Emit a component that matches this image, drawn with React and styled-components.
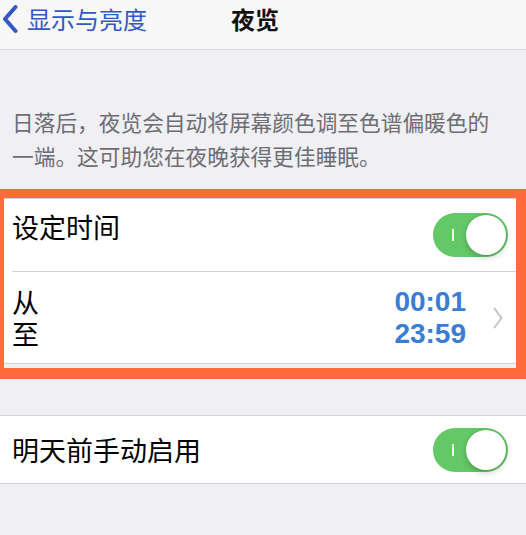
import React from 'react';
import styled, { createGlobalStyle } from 'styled-components';

const GlobalStyle = createGlobalStyle`
  html, body {
    margin: 0;
    padding: 0;
    background: #efeff4;
  }
  body {
    font-family: "Noto Sans CJK SC", "Noto Sans", sans-serif;
    color: #000;
  }
`;

const Page = styled.div`
  position: relative;
  width: 526px;
  min-height: 535px;
  overflow: hidden;
`;

const NavBar = styled.header`
  height: 50px;
  display: flex;
  align-items: flex-start;
  gap: 84px;
  padding-top: 3px;
  box-sizing: border-box;
  background: #f7f7f8;
  border-bottom: 1px solid #d6d6da;
`;

const BackLink = styled.a`
  display: flex;
  align-items: center;
  gap: 9px;
  padding-left: 2px;
  font-size: 24px;
  line-height: 32px;
  color: #3457c6;
  text-decoration: none;
  svg {
    flex: none;
  }
`;

const Title = styled.h1`
  margin: 0;
  font-size: 24px;
  line-height: 32px;
  font-weight: 700;
  color: #111;
`;

const Footnote = styled.p`
  margin: 0;
  padding: 55px 20px 0 12px;
  font-size: 21.7px;
  line-height: 34px;
  color: #6d6d72;
`;

const Group = styled.section`
  margin-top: ${(p) => p.$gap}px;
  background: #fff;
  border-top: 1px solid #d4d4d8;
  border-bottom: 1px solid #d4d4d8;
`;

const Row = styled.div`
  padding-left: 12px;
`;

const RowBody = styled.div`
  height: ${(p) => p.$height}px;
  display: flex;
  align-items: center;
  padding-right: ${(p) => p.$padRight}px;
  border-bottom: ${(p) => (p.$divider ? '1px solid #d4d4d8' : 'none')};
`;

const Label = styled.span`
  flex: 1;
  font-size: 27px;
  line-height: 40px;
  margin-bottom: ${(p) => p.$lift || 0}px;
`;

const Stack = styled.div`
  flex: 1;
  display: flex;
  flex-direction: column;
  font-size: 27px;
  line-height: 32px;
`;

const Times = styled.div`
  display: flex;
  flex-direction: column;
  align-items: flex-end;
  font-family: "Liberation Sans", "Noto Sans", sans-serif;
  font-size: 28px;
  font-weight: 700;
  line-height: 32px;
  color: #3a7dd6;
  margin-right: 27px;
`;

const Switch = styled.span`
  position: relative;
  width: 75px;
  height: 44px;
  border-radius: 22px;
  background: #63c865;
  flex: none;

  &::before {
    content: '';
    position: absolute;
    left: 19px;
    top: 16px;
    width: 2px;
    height: 12px;
    background: rgba(255, 255, 255, 0.85);
  }
`;

const Knob = styled.span`
  position: absolute;
  right: 2px;
  top: 2px;
  width: 40px;
  height: 40px;
  border-radius: 50%;
  background: #fff;
  box-shadow: 0 3px 6px rgba(0, 0, 0, 0.18), 0 0 0 1px rgba(0, 0, 0, 0.06);
`;

const Highlight = styled.div`
  position: absolute;
  top: 189px;
  left: 0;
  right: 0;
  height: 190px;
  box-sizing: border-box;
  border: solid #ff6a3d;
  border-width: 9px 10px 11px 4px;
  pointer-events: none;
`;

const Toggle = () => (
  <Switch>
    <Knob />
  </Switch>
);

const BackChevron = () => (
  <svg width="16" height="30" viewBox="0 0 16 30">
    <path d="M13.5 3 L3 15 L13.5 27" fill="none" stroke="#3457c6" strokeWidth="4" strokeLinecap="round" strokeLinejoin="round" />
  </svg>
);

const Disclosure = () => (
  <svg width="10" height="22" viewBox="0 0 10 22">
    <path d="M1.5 1.5 L8.5 11 L1.5 20.5" fill="none" stroke="#c4c4c9" strokeWidth="2" strokeLinecap="round" strokeLinejoin="round" />
  </svg>
);

export default function App() {
  return (
    <Page>
      <GlobalStyle />
      <NavBar>
        <BackLink href="#">
          <BackChevron />
          显示与亮度
        </BackLink>
        <Title>夜览</Title>
      </NavBar>

      <Footnote>
        日落后，夜览会自动将屏幕颜色调至色谱偏暖色的一端。这可助您在夜晚获得更佳睡眠。
      </Footnote>

      <Group $gap={25}>
        <Row>
          <RowBody $height={72} $padRight={18} $divider>
            <Label $lift={16}>设定时间</Label>
            <Toggle />
          </RowBody>
        </Row>
        <Row>
          <RowBody $height={91} $padRight={23}>
            <Stack>
              <span>从</span>
              <span>至</span>
            </Stack>
            <Times>
              <span>00:01</span>
              <span>23:59</span>
            </Times>
            <Disclosure />
          </RowBody>
        </Row>
      </Group>

      <Group $gap={51}>
        <Row>
          <RowBody $height={67} $padRight={18}>
            <Label>明天前手动启用</Label>
            <Toggle />
          </RowBody>
        </Row>
      </Group>

      <Highlight />
    </Page>
  );
}
